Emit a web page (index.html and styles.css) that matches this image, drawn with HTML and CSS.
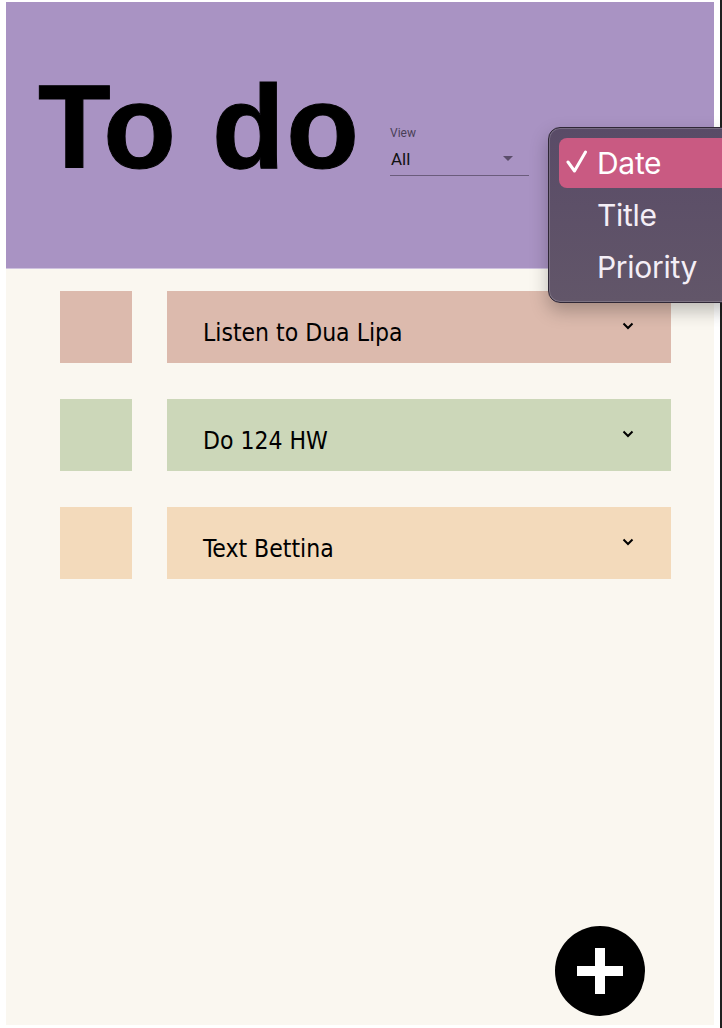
FILE: index.html
```html
<!DOCTYPE html>
<html lang="en">
<head>
<meta charset="utf-8">
<title>To do</title>
<link rel="stylesheet" href="styles.css">
</head>
<body>
<div class="screen">
  <div class="app">
    <header class="header">
      <h1 class="title">To do</h1>
      <div class="view-field">
        <span class="view-label">View</span>
        <div class="view-select">
          <span class="view-value">All</span>
          <span class="view-caret"></span>
        </div>
      </div>
    </header>

    <main class="list">
      <div class="row row-pink">
        <div class="swatch"></div>
        <div class="bar">
          <span class="bar-text">Listen to Dua Lipa</span>
          <svg class="chevron" width="12" height="8" viewBox="0 0 12 8"><polyline points="1.5,1.5 6,6 10.5,1.5" fill="none" stroke="#000" stroke-width="2"/></svg>
        </div>
      </div>
      <div class="row row-green">
        <div class="swatch"></div>
        <div class="bar">
          <span class="bar-text">Do 124 HW</span>
          <svg class="chevron" width="12" height="8" viewBox="0 0 12 8"><polyline points="1.5,1.5 6,6 10.5,1.5" fill="none" stroke="#000" stroke-width="2"/></svg>
        </div>
      </div>
      <div class="row row-peach">
        <div class="swatch"></div>
        <div class="bar">
          <span class="bar-text">Text Bettina</span>
          <svg class="chevron" width="12" height="8" viewBox="0 0 12 8"><polyline points="1.5,1.5 6,6 10.5,1.5" fill="none" stroke="#000" stroke-width="2"/></svg>
        </div>
      </div>
    </main>

    <button class="fab" aria-label="Add">
      <svg width="46" height="46" viewBox="0 0 46 46"><rect x="0" y="18" width="46" height="10" fill="#fff"/><rect x="18" y="0" width="10" height="46" fill="#fff"/></svg>
    </button>
  </div>
  <div class="rail"></div>

  <ul class="menu">
    <li class="menu-item selected">
      <svg class="check" width="22" height="24" viewBox="0 0 22 24"><polyline points="2,12 8.5,21 19.5,2" fill="none" stroke="#fff" stroke-width="3" stroke-linecap="round" stroke-linejoin="round"/></svg>
      <span>Date</span>
    </li>
    <li class="menu-item"><span>Title</span></li>
    <li class="menu-item"><span>Priority</span></li>
  </ul>
</div>
</body>
</html>
```

FILE: styles.css
```css
* { box-sizing: border-box; }

html, body {
  margin: 0;
  padding: 0;
  background: #ffffff;
}

.screen {
  position: relative;
  display: flex;
  width: 722px;
  height: 1028px;
  overflow: hidden;
}

.app {
  position: relative;
  width: 708px;
  height: 1023px;
  margin: 2px 0 3px 6px;
  background: #faf7f0;
  display: flex;
  flex-direction: column;
}

.rail {
  width: 2px;
  height: 1028px;
  margin-left: auto;
  background: #1f1f1f;
}

/* Header */
.header {
  height: 267px;
  flex: 0 0 267px;
  background: #a993c3;
  border-bottom: 1px solid #cfc2df;
  display: flex;
  align-items: flex-start;
  padding: 66px 0 0 32px;
}

.title {
  margin: 0;
  width: 352px;
  font-family: "Liberation Sans", Arial, sans-serif;
  font-weight: 700;
  font-size: 119px;
  line-height: 118px;
  letter-spacing: 1.5px;
  color: #000;
  white-space: nowrap;
  -webkit-text-stroke: 1px #000;
}

.view-field {
  width: 139px;
  margin-top: 58px;
  display: flex;
  flex-direction: column;
  font-family: Roboto, "Noto Sans", sans-serif;
}

.view-label {
  font-size: 12px;
  line-height: 14px;
  color: #4a3f58;
}

.view-select {
  display: flex;
  align-items: center;
  justify-content: space-between;
  height: 36px;
  padding: 2px 16px 0 1px;
  border-bottom: 1px solid #6b5c7c;
}

.view-value {
  font-size: 17px;
  line-height: 20px;
  color: #111;
}

.view-caret {
  width: 0;
  height: 0;
  border-left: 5px solid transparent;
  border-right: 5px solid transparent;
  border-top: 5px solid #5b4d6b;
}

/* List */
.list {
  display: flex;
  flex-direction: column;
  gap: 36px;
  padding: 22px 0 0 54px;
}

.row {
  display: flex;
  gap: 35px;
  height: 72px;
}

.swatch {
  width: 72px;
  height: 72px;
}

.bar {
  width: 504px;
  height: 72px;
  display: flex;
  align-items: flex-start;
  justify-content: space-between;
  padding: 27px 37px 0 36px;
}

.bar-text {
  font-family: "DejaVu Sans Condensed", "DejaVu Sans", sans-serif;
  font-size: 24.5px;
  line-height: 30px;
  color: #000;
}

.chevron {
  margin-top: 4px;
}

.row-pink .swatch, .row-pink .bar { background: #dcbaad; }
.row-green .swatch, .row-green .bar { background: #ccd7b9; }
.row-peach .swatch, .row-peach .bar { background: #f3dabb; }

/* FAB */
.fab {
  position: absolute;
  left: 549px;
  top: 924px;
  width: 90px;
  height: 90px;
  border-radius: 50%;
  border: none;
  padding: 0;
  background: #000;
  display: flex;
  align-items: center;
  justify-content: center;
  cursor: pointer;
}

/* Dropdown menu */
.menu {
  position: absolute;
  left: 548px;
  top: 127px;
  width: 190px;
  height: 176px;
  margin: 0;
  padding: 10px 0 10px 10px;
  list-style: none;
  border-radius: 12px;
  border: 1px solid #2f2736;
  background: linear-gradient(180deg, #594b67 0%, #625669 100%);
  box-shadow: inset 0 0 0 1px rgba(255,255,255,0.18), 0 8px 18px rgba(0,0,0,0.25);
  display: flex;
  flex-direction: column;
  gap: 2px;
  font-family: Inter, "Noto Sans", sans-serif;
}

.menu-item {
  position: relative;
  height: 50px;
  display: flex;
  align-items: center;
  padding-left: 38px;
  border-radius: 8px;
  font-size: 30px;
  letter-spacing: -0.3px;
  color: #f4eef6;
}

.menu-item.selected {
  background: #c95a82;
  color: #ffffff;
}

.check {
  position: absolute;
  left: 7px;
  top: 12px;
}
```
